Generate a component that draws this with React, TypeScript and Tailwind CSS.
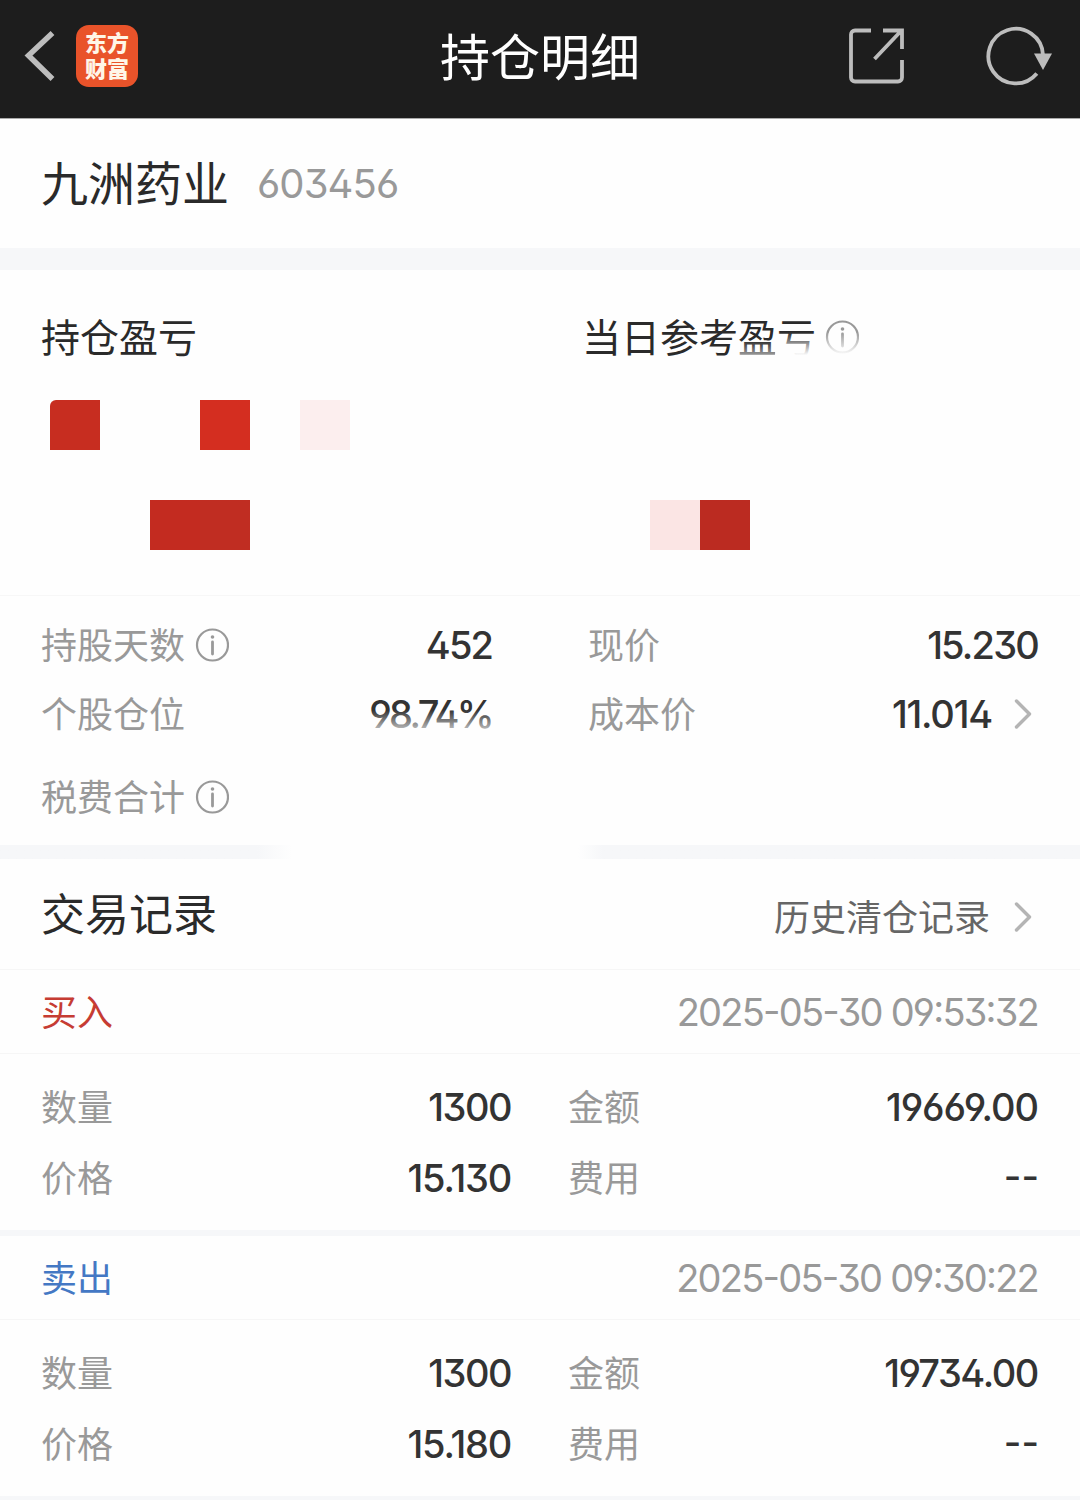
import React from "react";

const NUM = "font-['Inter',sans-serif] [font-feature-settings:'cv02','cv03','cv04','cv09','case']";

function InfoIcon({ className = "" }: { className?: string }) {
  return (
    <svg className={`h-[34px] w-[34px] shrink-0 ${className}`} viewBox="0 0 34 34" fill="none">
      <circle cx="17.500" cy="17" r="15.500" stroke="#999" strokeWidth="2.2" />
      <circle cx="17.500" cy="9" r="1.800" fill="#999" />
      <path d="M17.500 14v12" stroke="#999" strokeWidth="2.8" strokeLinecap="round" />
    </svg>
  );
}

function Chevron() {
  return (
    <svg className="h-[30px] w-[18px] shrink-0" viewBox="0 0 18 30" fill="none">
      <path d="M2.5 2L15.5 15L2.5 28" stroke="#b4b4b4" strokeWidth="3.400" strokeLinecap="round" strokeLinejoin="round" />
    </svg>
  );
}

function Label({ children }: { children: React.ReactNode }) {
  return <span className="pb-[5px] text-[36px] leading-[40px] text-[#999]">{children}</span>;
}

function Num({ children, className = "" }: { children: React.ReactNode; className?: string }) {
  return (
    <span className={`${NUM} text-[38px] leading-[40px] font-medium text-[#333] ${className}`}>{children}</span>
  );
}

type Trade = {
  side: string;
  sideClass: string;
  time: string;
  qty: string;
  amount: string;
  amountClass: string;
  price: string;
};

const trades: Trade[] = [
  {
    side: "买入", sideClass: "text-[#c63c33]", time: "2025-05-30 09:53:32",
    qty: "1300", amount: "19669.00", amountClass: "tracking-[-1px]", price: "15.130",
  },
  {
    side: "卖出", sideClass: "text-[#4478c4]", time: "2025-05-30 09:30:22",
    qty: "1300", amount: "19734.00", amountClass: "tracking-[-1.4px]", price: "15.180",
  },
];

function TradeRecord({ t }: { t: Trade }) {
  return (
    <article className="border-b-[6px] border-[#f6f7f9]">
      <div className="flex h-[84px] items-center justify-between border-b border-[#f6f6f6] pr-[42px] pl-[41px]">
        <span className={`pb-[4px] text-[36px] leading-[40px] ${t.sideClass}`}>{t.side}</span>
        <span className={`${NUM} text-[38px] leading-[40px] tracking-[-1.75px] text-[#999]`}>{t.time}</span>
      </div>
      <div className="flex h-[176px] pt-[33px] pr-[42px] pl-[41px]">
        <div className="flex w-[470px] flex-col gap-[31px]">
          <div className="flex h-10 items-center justify-between"><Label>数量</Label><Num className="tracking-[-1.5px]">{t.qty}</Num></div>
          <div className="flex h-10 items-center justify-between"><Label>价格</Label><Num className="tracking-[-1.2px]">{t.price}</Num></div>
        </div>
        <div className="ml-[57px] flex flex-1 flex-col gap-[31px]">
          <div className="flex h-10 items-center justify-between"><Label>金额</Label><Num className={t.amountClass}>{t.amount}</Num></div>
          <div className="flex h-10 items-center justify-between"><Label>费用</Label><Num className="-mr-[1px]">--</Num></div>
        </div>
      </div>
    </article>
  );
}

export default function App() {
  return (
    <main className="h-[1500px] w-[1080px] overflow-hidden bg-[#fefefe] font-['Noto_Sans_CJK_SC',sans-serif] whitespace-nowrap text-[#2a2a2a]">
      <header className="flex h-[119px] items-center border-b border-[#aaa] bg-[#1d1d1d] pb-[6px]">
        <svg className="ml-[22px] h-[54px] w-[34px]" viewBox="0 0 34 54" fill="none">
          <path d="M30.500 4L6.500 26.500L30.500 50" stroke="#bdbdbd" strokeWidth="5.500" strokeLinejoin="miter" />
        </svg>
        <div className="mb-px ml-[20px] flex h-[62px] w-[62px] flex-col items-center justify-center rounded-[13px] bg-[#e9532a] pb-[4px] text-[22px] leading-[26px] font-black text-[#fff6e8]">
          <span>东方</span>
          <span>财富</span>
        </div>
        <h1 className="mb-[5px] ml-[302px] w-[200px] text-[50px] leading-[60px] text-white">持仓明细</h1>
        <svg className="mb-px ml-[206px] h-[60px] w-[60px]" viewBox="0 0 60 60" fill="none" stroke="#bdbdbd" strokeWidth="3.8">
          <path d="M25 4.5H9a4 4 0 0 0-4 4v43a4 4 0 0 0 4 4h43a4 4 0 0 0 4-4V34" />
          <path d="M37 4.5H56V23M55 5L28.500 33" />
        </svg>
        <svg className="mt-[2px] ml-[76px] h-[64px] w-[72px]" viewBox="0 0 72 64" fill="none">
          <path d="M54.800 48.500A27.300 27.300 0 1 1 61 30" stroke="#bdbdbd" strokeWidth="3.800" />
          <path d="M52 28.500H70L61 45Z" fill="#bdbdbd" />
        </svg>
      </header>

      <section className="flex h-[129px] items-center pl-[41px]">
        <h2 className="pb-[5px] text-[47px] leading-[60px]">九洲药业</h2>
        <span className={`${NUM} mt-px ml-[28px] text-[40px] leading-[62px] tracking-[-0.9px] text-[#999]`}>603456</span>
      </section>
      <div className="h-[22px] bg-[#f6f7f9]" />

      <section className="relative flex h-[326px] border-b border-[#f7f7f7] pt-[47px]">
        <div className="w-[541px] pl-[41px]">
          <h3 className="h-10 text-[39px] leading-[37px]">持仓盈亏</h3>
          <div className="mt-[43px] ml-[9px] flex h-[50px]">
            <i className="w-[50px] rounded-tl-[6px] bg-[#c72d20]" />
            <i className="ml-[100px] w-[50px] bg-[#d42e20]" />
            <i className="ml-[50px] w-[50px] bg-[#fceeee]" />
          </div>
          <div className="mt-[50px] ml-[109px] flex h-[50px]">
            <i className="w-[50px] bg-[#c32b20]" />
            <i className="w-[50px] bg-[#c02d22]" />
          </div>
        </div>
        <div className="flex-1 pl-[41px]">
          <div className="flex h-10 items-center">
            <h3 className="pb-[5px] text-[39px] leading-[40px]">当日参考盈亏</h3>
            <InfoIcon className="mb-px ml-[9px]" />
          </div>
          <div className="mt-[143px] ml-[68px] flex h-[50px]">
            <i className="w-[50px] bg-[#fbe5e4]" />
            <i className="w-[50px] bg-[#bb2b21]" />
          </div>
        </div>
        <div className="absolute top-[70px] left-[738px] h-[20px] w-[37px] bg-linear-to-b from-transparent to-[#fefefe]/70" />
        <div className="absolute top-[62px] left-[775px] h-[29px] w-[90px] bg-linear-to-b from-transparent to-[#fefefe] to-80%" />
      </section>

      <section className="flex h-[249px] pt-[29px] pr-[42px] pl-[41px]">
        <div className="w-[451px]">
          <div className="flex h-10 items-center">
            <Label>持股天数</Label>
            <InfoIcon className="ml-[10px]" />
            <Num className="ml-auto tracking-[-1.9px]">452</Num>
          </div>
          <div className="relative mt-[29px] flex h-10 items-center justify-between">
            <Label>个股仓位</Label>
            <Num className="tracking-[-2.6px]">98.74%</Num>
            <div className="absolute top-[16px] right-0 h-[22px] w-[125px] bg-linear-to-b from-transparent to-[#fefefe]/75" />
          </div>
          <div className="mt-[43px] flex h-10 items-center">
            <Label>税费合计</Label>
            <InfoIcon className="ml-[10px]" />
          </div>
        </div>
        <div className="ml-[96px] flex-1">
          <div className="flex h-10 items-center justify-between">
            <Label>现价</Label>
            <Num className="tracking-[-1.8px]">15.230</Num>
          </div>
          <div className="mt-[29px] flex h-10 items-center">
            <Label>成本价</Label>
            <Num className="mr-[22px] ml-auto tracking-[-1.2px]">11.014</Num>
            <div className="mr-[6px] flex"><Chevron /></div>
          </div>
        </div>
      </section>
      <div className="flex h-[14px] justify-between">
        <div className="w-[292px] bg-linear-to-r from-[#f6f7f9] from-88% to-transparent" />
        <div className="w-[502px] bg-linear-to-l from-[#f6f7f9] from-95% to-transparent" />
      </div>

      <section>
        <div className="flex h-[111px] items-center border-b border-[#f6f6f6] pl-[41px]">
          <h2 className="pb-[4px] text-[44px] leading-[50px]">交易记录</h2>
          <span className="mt-px mr-[24px] ml-auto text-[36px] leading-[40px] text-[#666]">历史清仓记录</span>
          <div className="mt-[6px] mr-[48px] flex"><Chevron /></div>
        </div>
        {trades.map((t) => (
          <TradeRecord key={t.time} t={t} />
        ))}
      </section>
    </main>
  );
}
